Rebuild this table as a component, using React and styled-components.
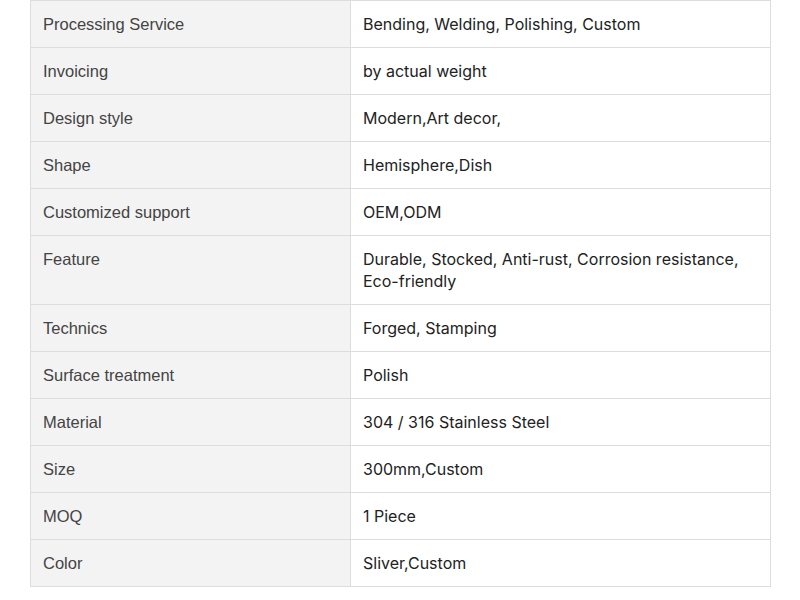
import styled, { createGlobalStyle } from "styled-components";

const GlobalStyle = createGlobalStyle`
  body {
    margin: 0;
    background: #fff;
  }
`;

const Page = styled.div`
  padding: 0 29px 0 30px;
`;

const SpecTable = styled.table`
  width: 741px;
  border-collapse: collapse;
  border: 1px solid #dddddd;
`;

const LabelCell = styled.td`
  width: 295px;
  padding: 12px;
  background: #f3f3f3;
  border: 1px solid #dddddd;
  color: #444444;
  font-family: "Liberation Sans", Arial, sans-serif;
  font-size: 16.5px;
  line-height: 22px;
  vertical-align: top;
`;

const ValueCell = styled.td`
  padding: 12px;
  background: #fff;
  border: 1px solid #dddddd;
  color: #222222;
  font-family: Inter, "Noto Sans", sans-serif;
  font-size: 16px;
  line-height: 22px;
  vertical-align: top;
`;

const specs = [
  ["Processing Service", "Bending, Welding, Polishing, Custom"],
  ["Invoicing", "by actual weight"],
  ["Design style", "Modern,Art decor,"],
  ["Shape", "Hemisphere,Dish"],
  ["Customized support", "OEM,ODM"],
  ["Feature", "Durable, Stocked, Anti-rust, Corrosion resistance, Eco-friendly"],
  ["Technics", "Forged, Stamping"],
  ["Surface treatment", "Polish"],
  ["Material", "304 / 316 Stainless Steel"],
  ["Size", "300mm,Custom"],
  ["MOQ", "1 Piece"],
  ["Color", "Sliver,Custom"],
];

function App() {
  return (
    <Page>
      <GlobalStyle />
      <SpecTable>
        <tbody>
          {specs.map(([label, value]) => (
            <tr key={label}>
              <LabelCell>{label}</LabelCell>
              <ValueCell>{value}</ValueCell>
            </tr>
          ))}
        </tbody>
      </SpecTable>
    </Page>
  );
}

export default App;
